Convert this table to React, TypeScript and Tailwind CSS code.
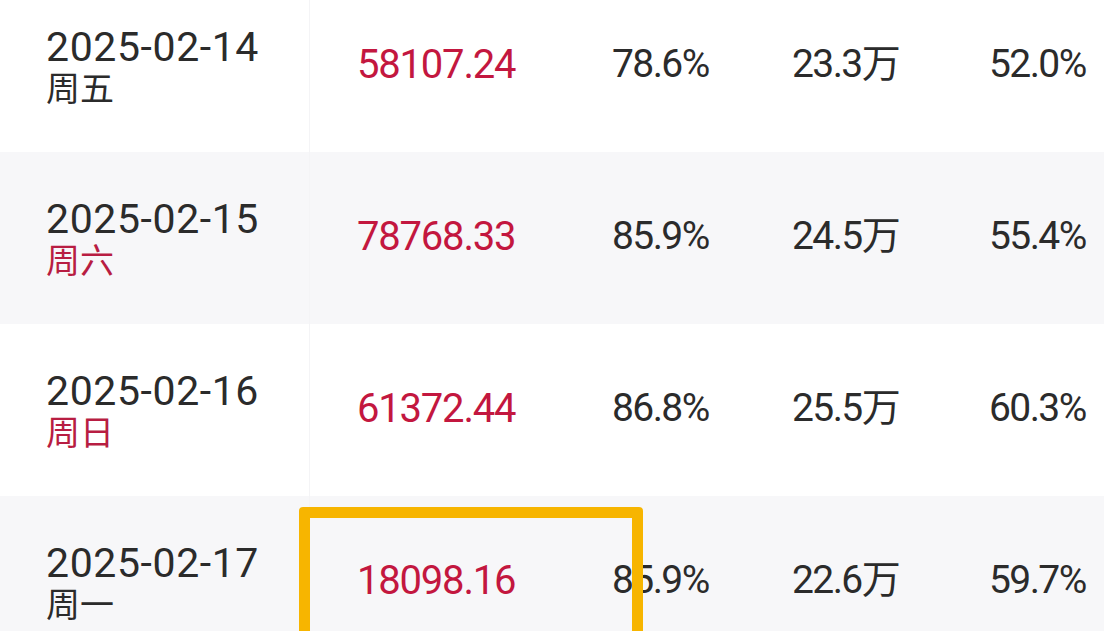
import React from 'react';

interface Row {
  date: string;
  weekday: string;
  weekend?: boolean;
  amount: string;
  rate: string;
  visits: string;
  share: string;
}

const rows: Row[] = [
  { date: '2025-02-14', weekday: '周五', amount: '58107.24', rate: '78.6%', visits: '23.3万', share: '52.0%' },
  { date: '2025-02-15', weekday: '周六', weekend: true, amount: '78768.33', rate: '85.9%', visits: '24.5万', share: '55.4%' },
  { date: '2025-02-16', weekday: '周日', weekend: true, amount: '61372.44', rate: '86.8%', visits: '25.5万', share: '60.3%' },
  { date: '2025-02-17', weekday: '周一', amount: '18098.16', rate: '85.9%', visits: '22.6万', share: '59.7%' },
];

const num = "font-['Roboto','Noto_Sans_CJK_SC',sans-serif]";
const cjk = "font-['Noto_Sans_CJK_SC',sans-serif]";

export default function App() {
  return (
    <div className="relative h-[631px] w-[1104px] overflow-hidden bg-white">
      <div className="-mt-[20px] flex flex-col">
        {rows.map((row, i) => (
          <div
            key={row.date}
            className={`flex h-[172px] items-center ${i % 2 === 1 ? 'bg-[#f7f7f9]' : 'bg-white'}`}
          >
            <div className="flex h-full w-[310px] shrink-0 flex-col justify-center border-r border-[#f4f4f6] pb-[2px] pl-[46px]">
              <span className={`${num} text-[41px] leading-[44px] tracking-[0.6px] text-[#2b2b2b]`}>
                {row.date}
              </span>
              <span
                className={`${cjk} text-[34px] leading-[36px] ${row.weekend ? 'text-[#b81d42]' : 'text-[#2b2b2b]'}`}
              >
                {row.weekday}
              </span>
            </div>
            <div className="w-[302px] shrink-0 pb-[3px] pl-[47px]">
              <span className={`${num} text-[40px] tracking-[-1.2px] text-[#c3173f]`}>{row.amount}</span>
            </div>
            <div className="w-[180px] shrink-0 pb-[3px]">
              <span className={`${num} text-[39px] tracking-[-1.6px] text-[#2b2b2b]`}>{row.rate}</span>
            </div>
            <div className="w-[197px] shrink-0 pb-[3px]">
              <span className={`${num} text-[39px] tracking-[-1.6px] text-[#2b2b2b]`}>{row.visits}</span>
            </div>
            <div className="flex-1 pb-[3px]">
              <span className={`${num} text-[39px] tracking-[-1.6px] text-[#2b2b2b]`}>{row.share}</span>
            </div>
          </div>
        ))}
      </div>
      <div className="absolute left-[299px] top-[507px] h-[160px] w-[344px] rounded-[4px] border-[11px] border-[#f7b500]" />
    </div>
  );
}
